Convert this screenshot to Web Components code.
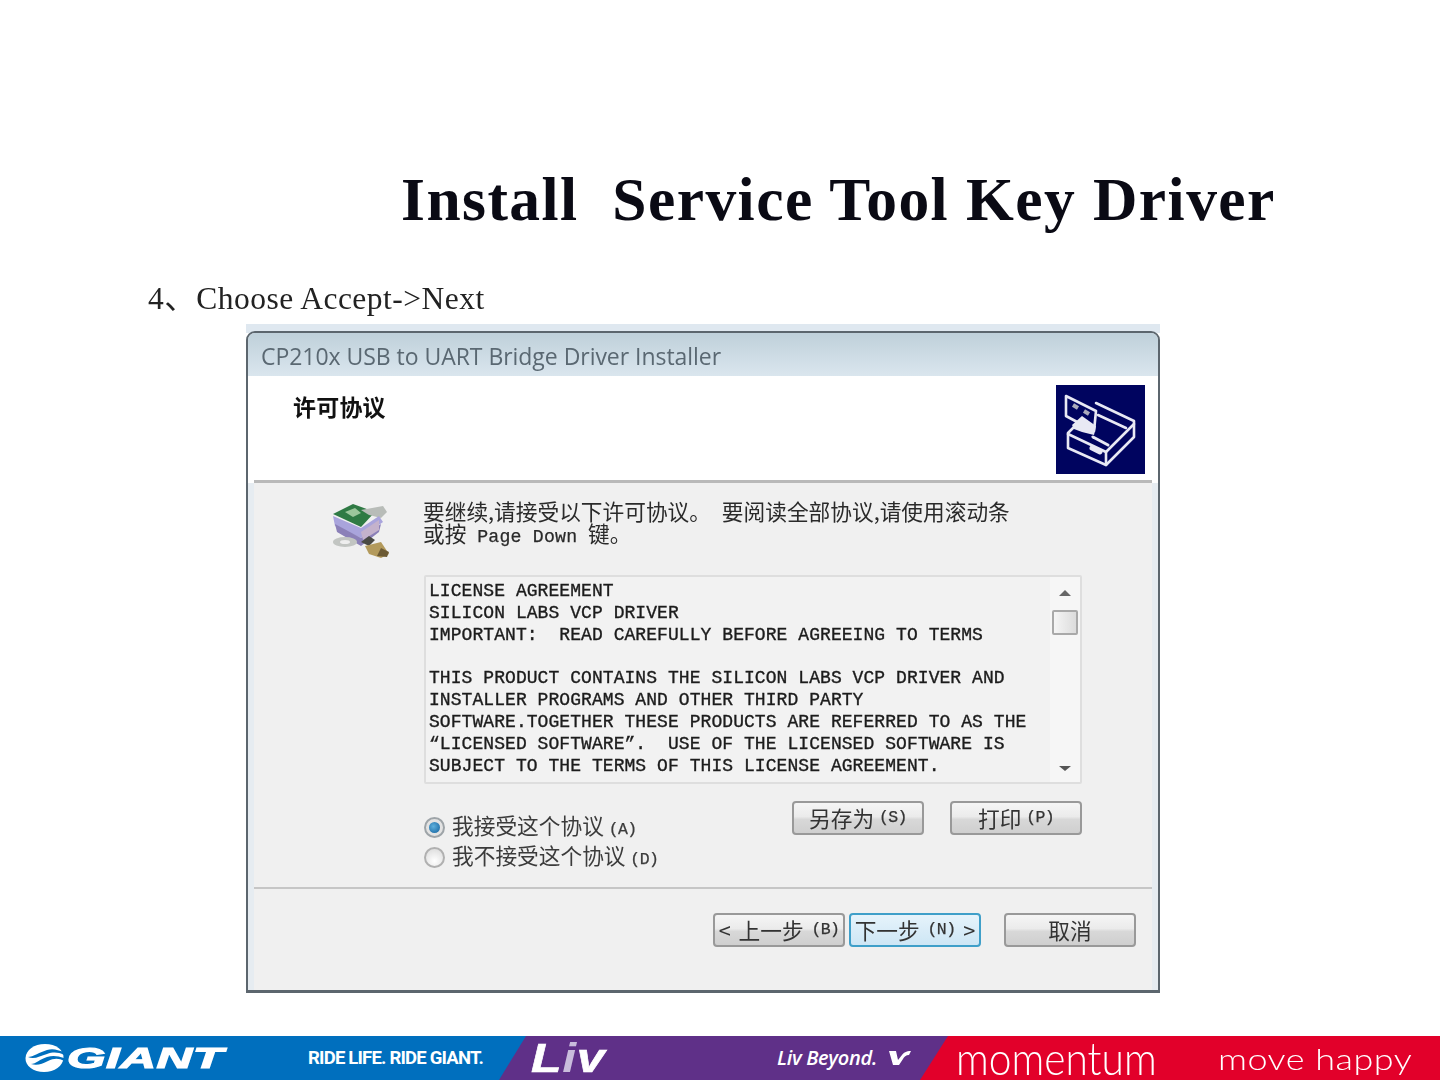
<!DOCTYPE html>
<html lang="en"><head><meta charset="utf-8"><title>Install Service Tool Key Driver</title>
<style>
html,body{margin:0;padding:0;background:#fff}
body{font-family:"Liberation Serif",serif}
</style></head><body>
<slide-page>
  <slide-title>Install  Service Tool Key Driver</slide-title>
  <slide-step>4、Choose Accept-&gt;Next</slide-step>
  <wizard-dialog caption="CP210x USB to UART Bridge Driver Installer">
    <wizard-header>许可协议</wizard-header>
    <wizard-intro>
      <books-icon slot="icon"></books-icon>
      <span>要继续,请接受以下许可协议。 要阅读全部协议,请使用滚动条</span>
      <span>或按 <tt-text wide>Page Down</tt-text> 键。</span>
    </wizard-intro>
    <license-box>LICENSE AGREEMENT
SILICON LABS VCP DRIVER
IMPORTANT:  READ CAREFULLY BEFORE AGREEING TO TERMS

THIS PRODUCT CONTAINS THE SILICON LABS VCP DRIVER AND
INSTALLER PROGRAMS AND OTHER THIRD PARTY
SOFTWARE.TOGETHER THESE PRODUCTS ARE REFERRED TO AS THE
“LICENSED SOFTWARE”.  USE OF THE LICENSED SOFTWARE IS
SUBJECT TO THE TERMS OF THIS LICENSE AGREEMENT.</license-box>
    <wizard-options>
      <win-radio slot="radios" checked>我接受这个协议 <tt-text>(A)</tt-text></win-radio>
      <win-radio slot="radios">我不接受这个协议 <tt-text>(D)</tt-text></win-radio>
      <win-button slot="actions">另存为 <tt-text>(S)</tt-text></win-button>
      <win-button slot="actions">打印 <tt-text>(P)</tt-text></win-button>
    </wizard-options>
    <wizard-nav>
      <win-button>&lt; 上一步 <tt-text>(B)</tt-text></win-button>
      <win-button focused>下一步 <tt-text>(N)</tt-text> &gt;</win-button>
      <win-button class="cancel">取消</win-button>
    </wizard-nav>
  </wizard-dialog>
  <brand-footer></brand-footer>
</slide-page>
<script>
const CJK='"Noto Sans CJK SC",sans-serif';
function comp(name,html){
  customElements.define(name,class extends HTMLElement{
    constructor(){super();this.attachShadow({mode:'open'}).innerHTML=html;}
    connectedCallback(){
      if(name==='wizard-dialog')this.shadowRoot.getElementById('cap').textContent=this.getAttribute('caption');
    }
  });
}
comp('slide-page',`<style>:host{display:flex;flex-direction:column;width:1440px;height:1080px;overflow:hidden}</style><slot></slot>`);
comp('slide-title',`<style>:host{display:block;padding:163px 0 0 401px;font:700 61.5px/72px "Liberation Serif",serif;color:#0a0a14;white-space:pre;letter-spacing:1.45px;filter:blur(.35px)}</style><slot></slot>`);
comp('slide-step',`<style>:host{display:block;padding:45px 0 0 148px;font:31.5px/38px "Liberation Serif","Noto Sans CJK SC",serif;color:#222;filter:blur(.3px);letter-spacing:.48px}</style><slot></slot>`);
comp('tt-text',`<style>:host{display:inline;font-family:"Liberation Mono",monospace;font-size:.76em;letter-spacing:-.6px;word-spacing:0;-webkit-text-stroke:.25px currentColor}
:host([wide]){font-size:18.2px;letter-spacing:.2px}</style><slot></slot>`);
comp('wizard-dialog',`<style>
:host{display:block;margin:6px 0 0 246px;width:914px;box-sizing:border-box;padding-top:7px;background:linear-gradient(#dfe8f0 0 9px,transparent 9px);font-family:${CJK};filter:blur(.45px)}
.win{height:662px;box-sizing:border-box;border:2px solid #5c666e;border-bottom-width:3px;border-radius:9px 9px 0 0;display:flex;flex-direction:column;background:#e6ecf1}
.cap{height:43px;flex:none;box-sizing:border-box;padding:7px 0 0 13px;font:23px/32px "Open Sans",sans-serif;color:#5a6872;background:linear-gradient(#bfd0da,#dae6ee);border-radius:7px 7px 0 0;white-space:nowrap;letter-spacing:-.04px}
.body{flex:1;min-height:0;display:flex;flex-direction:column;margin:0 6px;background:#f0f0f0}
</style><div class="win"><div class="cap" id="cap"></div><div class="body"><slot></slot></div></div>`);
comp('wizard-header',`<style>
:host{display:flex;justify-content:space-between;height:107px;flex:none;box-sizing:border-box;padding:9px 13px 0 45px;margin:0 -6px;background:#fff linear-gradient(#b9b9b9,#b9b9b9) no-repeat center bottom/calc(100% - 12px) 3px}
.t{font:700 23px/42px ${CJK};color:#111;letter-spacing:.2px}
</style><div class="t"><slot></slot></div><installer-icon></installer-icon>`);
comp('installer-icon',`<style>:host{display:block;width:89px;height:89px}svg{display:block}</style>
<svg width="89" height="89" viewBox="0 0 89 89"><rect width="89" height="89" fill="#00045f"/>
<g fill="none" stroke="#e8e9f4" stroke-width="2.6" stroke-linejoin="round" stroke-linecap="round">
<path d="M10 11 40 26 38 46 10 31Z"/>
<path d="M40 18 78 36 78 52 50 80 12 63 12 48 24 36"/>
<path d="M12 49 50 67 78 39"/><path d="M50 67V80"/>
<path d="M42 30 70 43"/><path d="M37 52 52 60" stroke-width="3"/>
<path d="M36 63 44 67" stroke-width="5"/></g>
<path d="M16 40 26 31 40 41 38 50 26 47 18 44Z" fill="#e8e9f4"/>
<path d="M17 20 22 23M28 26 33 29" stroke="#aab" stroke-width="4"/></svg>`);
comp('books-icon',`<style>:host{display:block;width:62px;height:60px}svg{display:block;filter:blur(.7px)}</style>
<svg width="62" height="60" viewBox="0 0 62 60">
<path d="M2 14 22 4 44 12 30 27Z" fill="#2f7a44"/><path d="M14 12 24 8 30 13 22 17Z" fill="#9cc79c"/>
<path d="M30 10 52 6 56 12 50 18 38 15Z" fill="#b8bcb8"/>
<path d="M2 16 30 28 48 16 52 22 30 38 4 26Z" fill="#a9a4dc"/>
<path d="M4 24 30 38 50 24 48 32 30 46 6 32Z" fill="#8b80b8"/><path d="M30 32 48 20 48 30 32 40Z" fill="#c4b2cc"/>
<ellipse cx="14" cy="42" rx="12" ry="5" fill="#c2c5c2"/><ellipse cx="14" cy="42" rx="5" ry="2" fill="#eee"/>
<path d="M30 42 38 36 44 40 38 46Z" fill="#4a4a44"/>
<path d="M34 46 50 42 58 54 50 58 38 54Z" fill="#b39a5c"/><path d="M50 48 58 52 56 57 46 56Z" fill="#6c5a34"/>
</svg>`);
comp('wizard-intro',`<style>
:host{display:flex;flex:none;padding:17px 0 0 77px;color:#2a2a2a;font:21.7px/22px ${CJK}}
.i{width:92px;flex:none}.l{display:flex;flex-direction:column}
::slotted(span){display:block;white-space:pre;word-spacing:6px}
</style><div class="i"><slot name="icon"></slot></div><div class="l"><slot></slot></div>`);
comp('license-box',`<style>
:host{display:flex;flex:none;margin:15px 0 0 170px;width:658px;height:209px;box-sizing:border-box;border:2px solid #dedede;border-radius:2px;background:#f2f2f2;color:#1c1c1c}
.t{flex:1;padding:4px 0 0 3px;font:18px/21.85px "Liberation Mono",monospace;letter-spacing:.06px;white-space:pre;-webkit-text-stroke:.35px #1c1c1c;overflow:hidden}
.s{width:30px;flex:none;display:flex;flex-direction:column;align-items:center;background:#f6f6f6;padding:13px 0 11px;box-sizing:border-box}
.u,.d{width:0;height:0;border:6px solid transparent;border-top:0;border-bottom:6px solid #666}
.d{border-bottom:0;border-top:5px solid #555}
.th{width:26px;height:25px;box-sizing:border-box;border:2px solid #a9a9a9;border-radius:2px;background:linear-gradient(90deg,#f5f5f5,#dcdcdc);margin-top:14px}
.g{flex:1}
</style><div class="t"><slot></slot></div><div class="s"><i class="u"></i><i class="th"></i><i class="g"></i><i class="d"></i></div>`);
comp('wizard-options',`<style>
:host{display:flex;flex:none;justify-content:space-between;margin:17px 0 0 170px;width:658px;height:86px;box-sizing:border-box}
.r{display:flex;flex-direction:column;padding-top:11px}
.a{display:flex;gap:26px;align-items:flex-start}
::slotted(win-button){width:132px}
</style><div class="r"><slot name="radios"></slot></div><div class="a"><slot name="actions"></slot></div>`);
comp('win-radio',`<style>
:host{display:flex;align-items:center;height:30px;font:21.7px/30px ${CJK};color:#3b3b3b;white-space:pre;gap:7px}
.o{width:21px;height:21px;flex:none;box-sizing:border-box;border-radius:50%;border:2px solid #b0b0b0;background:radial-gradient(circle at 50% 70%,#fff,#d8d8d8);display:flex;align-items:center;justify-content:center}
:host([checked]) .o{background:#e3e3e3;border-color:#9ea4a8}
:host([checked]) .o::after{content:"";width:11px;height:11px;border-radius:50%;background:radial-gradient(circle at 40% 40%,#5fb0dd,#105f9c)}
</style><i class="o"></i><span><slot></slot></span>`);
comp('win-button',`<style>
:host{display:flex;align-items:center;justify-content:center;height:34px;box-sizing:border-box;border:2px solid #999;border-radius:4px;background:linear-gradient(#f5f5f5 0,#ebebeb 45%,#d8d8d8 55%,#cfcfcf);font:21.7px/28px ${CJK};color:#333;white-space:pre}
:host([focused]){border-color:#3f9fc9;background:linear-gradient(#e6f3fb,#cde6f5)}
</style><slot></slot>`);
comp('wizard-nav',`<style>
:host{display:flex;flex:1;min-height:0;box-sizing:border-box;padding:24px 0 0 459px;gap:4px;margin-top:0;border-top:2px solid #c6c6c6}
::slotted(win-button){width:132px;word-spacing:3px}
::slotted(.cancel){margin-left:19px}
</style><slot></slot>`);
comp('brand-footer',`<style>
:host{display:flex;height:44px;flex:none;margin-top:auto;overflow:hidden;color:#fff;white-space:nowrap}
.b{height:44px;display:flex;align-items:center;flex:none;box-sizing:border-box}
.blue{width:526px;background:#006fbe;padding-left:25px}
.purple{width:449px;margin-left:-27px;background:#5f3088;clip-path:polygon(27px 0,100% 0,100% 100%,0 100%);padding-left:32px}
.red{flex:1;margin-left:-28px;background:#e2002a;clip-path:polygon(28px 0,100% 0,100% 100%,0 100%);padding-left:36px}
.gi{font:italic 700 30px/44px "Liberation Sans",sans-serif;-webkit-text-stroke:1.2px #fff;display:inline-block;transform:scaleX(1.65);transform-origin:left center;width:102px;margin-left:3px;letter-spacing:.3px}
.rl{font:700 18.5px/44px Roboto,sans-serif;letter-spacing:-.8px;margin-left:139px;display:inline-block;width:175px}
.lv{font:italic 700 41px/44px "Liberation Sans",sans-serif;display:inline-block;transform:scaleX(1.22);transform-origin:left center;width:64px;-webkit-text-stroke:.6px #fff;letter-spacing:.5px}
.lv b{font-weight:700;color:#c9bcdc;-webkit-text-stroke:0}
.lb{font:italic 600 20px/44px "Open Sans",sans-serif;margin-left:182px;letter-spacing:-.3px;display:inline-block;width:112px}
.mo{font:300 46px/44px Lato,sans-serif;display:inline-block;transform:scaleX(.885);transform-origin:left center;width:262px}
.mh{font:300 30px/44px Lato,sans-serif;display:inline-block;transform:scaleX(1.2);transform-origin:left center;letter-spacing:.4px;width:170px}
</style>
<div class="b blue"><svg width="39" height="28" viewBox="0 0 39 28"><path d="M20 0C9 0 1 6 .5 14c-.4 8 8 14 18.500 14S38 22 38.500 14C39 6 31 0 20 0Z" fill="#fff"/><path d="M39 8C33 6 28 4 22 6 15 8 8 13 3 13 9 16 15 12 22 10 28 8 33 8 39 11ZM39 14C33 12 28 11 22 13 15 15 11 20 6 20 12 22 17 20 23 17 29 14 34 14 39 17Z" fill="#006fbe"/></svg><span class="gi">GIANT</span><span class="rl">RIDE LIFE. RIDE GIANT.</span></div>
<div class="b purple"><span class="lv">L<b>i</b>v</span><span class="lb">Liv Beyond.</span><svg width="22" height="16" viewBox="0 0 22 16"><path d="M0 1H7L9 10 13 5C14.500 3 17 1 22 1L20 5C17 5 15 7 14 9L10 15H4Z" fill="#fff"/></svg></div>
<div class="b red"><span class="mo">momentum</span><span class="mh">move happy</span></div>`);
</script>
</body></html>
